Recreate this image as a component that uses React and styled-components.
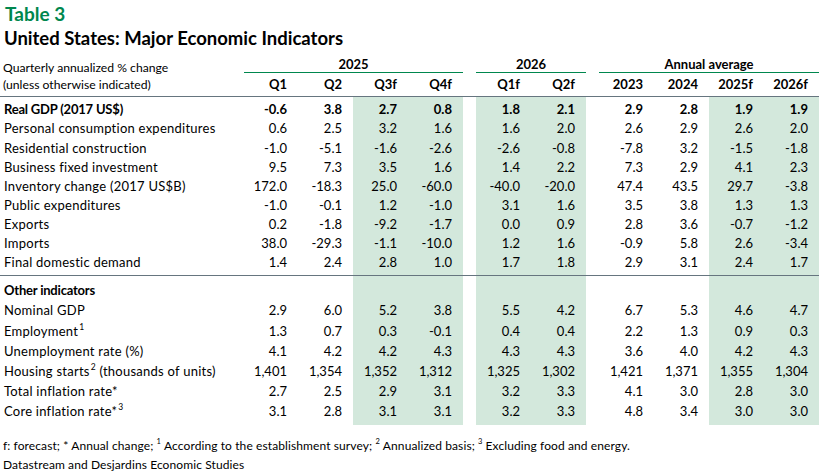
import React from 'react';
import styled, { createGlobalStyle } from 'styled-components';

const SHADE = '#d3e8dc';
const GREEN = '#00874e';
const RULE = '#66757f';
const COLS = '243px repeat(4, 55px) 13px repeat(2, 55px) 13px repeat(4, 55px)';

// which of the 10 value columns are forecasts (shaded)
const SHADED = [false, false, true, true, true, true, false, false, true, true];

const Global = createGlobalStyle`
  html, body {
    margin: 0;
    padding: 0;
    background: #ffffff;
    overflow: hidden;
  }
  body {
    font-family: Lato, "Open Sans", sans-serif;
    color: #000000;
    font-size: 13px;
  }
`;

const Page = styled.div`
  width: 819px;
  padding-top: 1px;
`;

const Kicker = styled.div`
  font-size: 19px;
  font-weight: 700;
  line-height: 25px;
  color: ${GREEN};
  padding-left: 5px;
`;

const Title = styled.div`
  font-size: 18.5px;
  font-weight: 700;
  line-height: 25px;
  padding-left: 4px;
`;

const Header = styled.div`
  display: grid;
  grid-template-columns: ${COLS};
  grid-template-rows: 17px 23.5px;
  margin-top: 4.5px;
`;

const HeadNote = styled.div`
  grid-column: 1;
  grid-row: 1 / 3;
  padding: 3px 0 0 3px;
  font-size: 12.2px;
  line-height: 17px;
  white-space: nowrap;
`;

const Group = styled.div`
  grid-row: 1;
  grid-column: ${p => p.$span};
  border-bottom: 1px solid ${GREEN};
  text-align: center;
  font-weight: 700;
  line-height: 16px;
  margin-left: ${p => p.$inset || 0}px;
`;

const ColHead = styled.div`
  grid-row: 2;
  grid-column: ${p => p.$col};
  text-align: right;
  padding: 3px 11px 0 0;
  line-height: 17px;
  font-weight: 700;
`;

const Section = styled.div`
  border-top: 1px solid ${RULE};
`;

const Row = styled.div`
  display: grid;
  grid-template-columns: ${COLS};
  height: ${p => p.$h}px;
  line-height: ${p => p.$h}px;
  font-weight: ${p => (p.$bold ? 700 : 400)};
`;

const Label = styled.div`
  padding-left: 4px;
  white-space: nowrap;
  letter-spacing: ${p => (p.$bold ? '-0.2px' : '0.25px')};
`;

const Value = styled.div`
  background: ${p => (p.$shade ? SHADE : 'transparent')};
  text-align: right;
  padding-right: 11px;
  white-space: nowrap;
`;

const Sup = styled.sup`
  font-size: 8.5px;
  line-height: 0;
  vertical-align: 6px;
  margin-left: 1px;
`;

const Notes = styled.div`
  margin-top: 11px;
  padding-left: 3px;
  font-size: 12px;
  line-height: 19px;
  letter-spacing: 0.1px;
  white-space: nowrap;
`;

const NoteSup = styled.sup`
  font-size: 7.5px;
  line-height: 0;
  vertical-align: 6px;
  margin-right: 3px;
`;

const upper = [
  { label: 'Real GDP (2017 US$)', bold: true, v: ['-0.6', '3.8', '2.7', '0.8', '1.8', '2.1', '2.9', '2.8', '1.9', '1.9'] },
  { label: 'Personal consumption expenditures', v: ['0.6', '2.5', '3.2', '1.6', '1.6', '2.0', '2.6', '2.9', '2.6', '2.0'] },
  { label: 'Residential construction', v: ['-1.0', '-5.1', '-1.6', '-2.6', '-2.6', '-0.8', '-7.8', '3.2', '-1.5', '-1.8'] },
  { label: 'Business fixed investment', v: ['9.5', '7.3', '3.5', '1.6', '1.4', '2.2', '7.3', '2.9', '4.1', '2.3'] },
  { label: 'Inventory change (2017 US$B)', v: ['172.0', '-18.3', '25.0', '-60.0', '-40.0', '-20.0', '47.4', '43.5', '29.7', '-3.8'] },
  { label: 'Public expenditures', v: ['-1.0', '-0.1', '1.2', '-1.0', '3.1', '1.6', '3.5', '3.8', '1.3', '1.3'] },
  { label: 'Exports', v: ['0.2', '-1.8', '-9.2', '-1.7', '0.0', '0.9', '2.8', '3.6', '-0.7', '-1.2'] },
  { label: 'Imports', v: ['38.0', '-29.3', '-1.1', '-10.0', '1.2', '1.6', '-0.9', '5.8', '2.6', '-3.4'] },
  { label: 'Final domestic demand', v: ['1.4', '2.4', '2.8', '1.0', '1.7', '1.8', '2.9', '3.1', '2.4', '1.7'] },
];

const lower = [
  { label: 'Nominal GDP', v: ['2.9', '6.0', '5.2', '3.8', '5.5', '4.2', '6.7', '5.3', '4.6', '4.7'] },
  { label: 'Employment', sup: '1', v: ['1.3', '0.7', '0.3', '-0.1', '0.4', '0.4', '2.2', '1.3', '0.9', '0.3'] },
  { label: 'Unemployment rate (%)', v: ['4.1', '4.2', '4.2', '4.3', '4.3', '4.3', '3.6', '4.0', '4.2', '4.3'] },
  { label: 'Housing starts', sup: '2', after: ' (thousands of units)', v: ['1,401', '1,354', '1,352', '1,312', '1,325', '1,302', '1,421', '1,371', '1,355', '1,304'] },
  { label: 'Total inflation rate*', v: ['2.7', '2.5', '2.9', '3.1', '3.2', '3.3', '4.1', '3.0', '2.8', '3.0'] },
  { label: 'Core inflation rate*', sup: '3', v: ['3.1', '2.8', '3.1', '3.1', '3.2', '3.3', '4.8', '3.4', '3.0', '3.0'] },
];

const quarters = [
  { t: 'Q1', c: 2 }, { t: 'Q2', c: 3 }, { t: 'Q3f', c: 4 }, { t: 'Q4f', c: 5 },
  { t: 'Q1f', c: 7 }, { t: 'Q2f', c: 8 },
  { t: '2023', c: 10 }, { t: '2024', c: 11 }, { t: '2025f', c: 12 }, { t: '2026f', c: 13 },
];

function Cells({ values }) {
  const cell = i => (
    <Value key={i} $shade={SHADED[i]}>{values ? values[i] : ''}</Value>
  );
  return (
    <>
      {[0, 1, 2, 3].map(cell)}
      <div />
      {[4, 5].map(cell)}
      <div />
      {[6, 7, 8, 9].map(cell)}
    </>
  );
}

function Filler({ h }) {
  return (
    <Row $h={h}>
      <div />
      <Cells />
    </Row>
  );
}

function DataRow({ row, h }) {
  return (
    <Row $h={h} $bold={row.bold}>
      <Label $bold={row.bold}>
        {row.label}
        {row.sup && <Sup>{row.sup}</Sup>}
        {row.after}
      </Label>
      <Cells values={row.v} />
    </Row>
  );
}

export default function App() {
  return (
    <Page>
      <Global />
      <Kicker>Table 3</Kicker>
      <Title>United States: Major Economic Indicators</Title>

      <Header>
        <HeadNote>
          Quarterly annualized % change
          <br />
          (unless otherwise indicated)
        </HeadNote>
        <Group $span="2 / 6" $inset={1}>2025</Group>
        <Group $span="7 / 9">2026</Group>
        <Group $span="10 / 14">Annual average</Group>
        {quarters.map(q => (
          <ColHead key={q.t} $col={q.c}>{q.t}</ColHead>
        ))}
      </Header>

      <Section>
        <Filler h={3.4} />
        {upper.map(r => (
          <DataRow key={r.label} row={r} h={19.1} />
        ))}
        <Filler h={2.7} />
      </Section>

      <Section>
        <Filler h={5.4} />
        <Row $h={19.1} $bold>
          <Label $bold>Other indicators</Label>
          <Cells />
        </Row>
        {lower.map(r => (
          <DataRow key={r.label} row={r} h={20.2} />
        ))}
        <Filler h={3.3} />
      </Section>

      <Notes>
        f: forecast; * Annual change; <NoteSup>1</NoteSup>According to the establishment survey;{' '}
        <NoteSup>2</NoteSup>Annualized basis; <NoteSup>3</NoteSup>Excluding food and energy.
        <br />
        Datastream and Desjardins Economic Studies
      </Notes>
    </Page>
  );
}
